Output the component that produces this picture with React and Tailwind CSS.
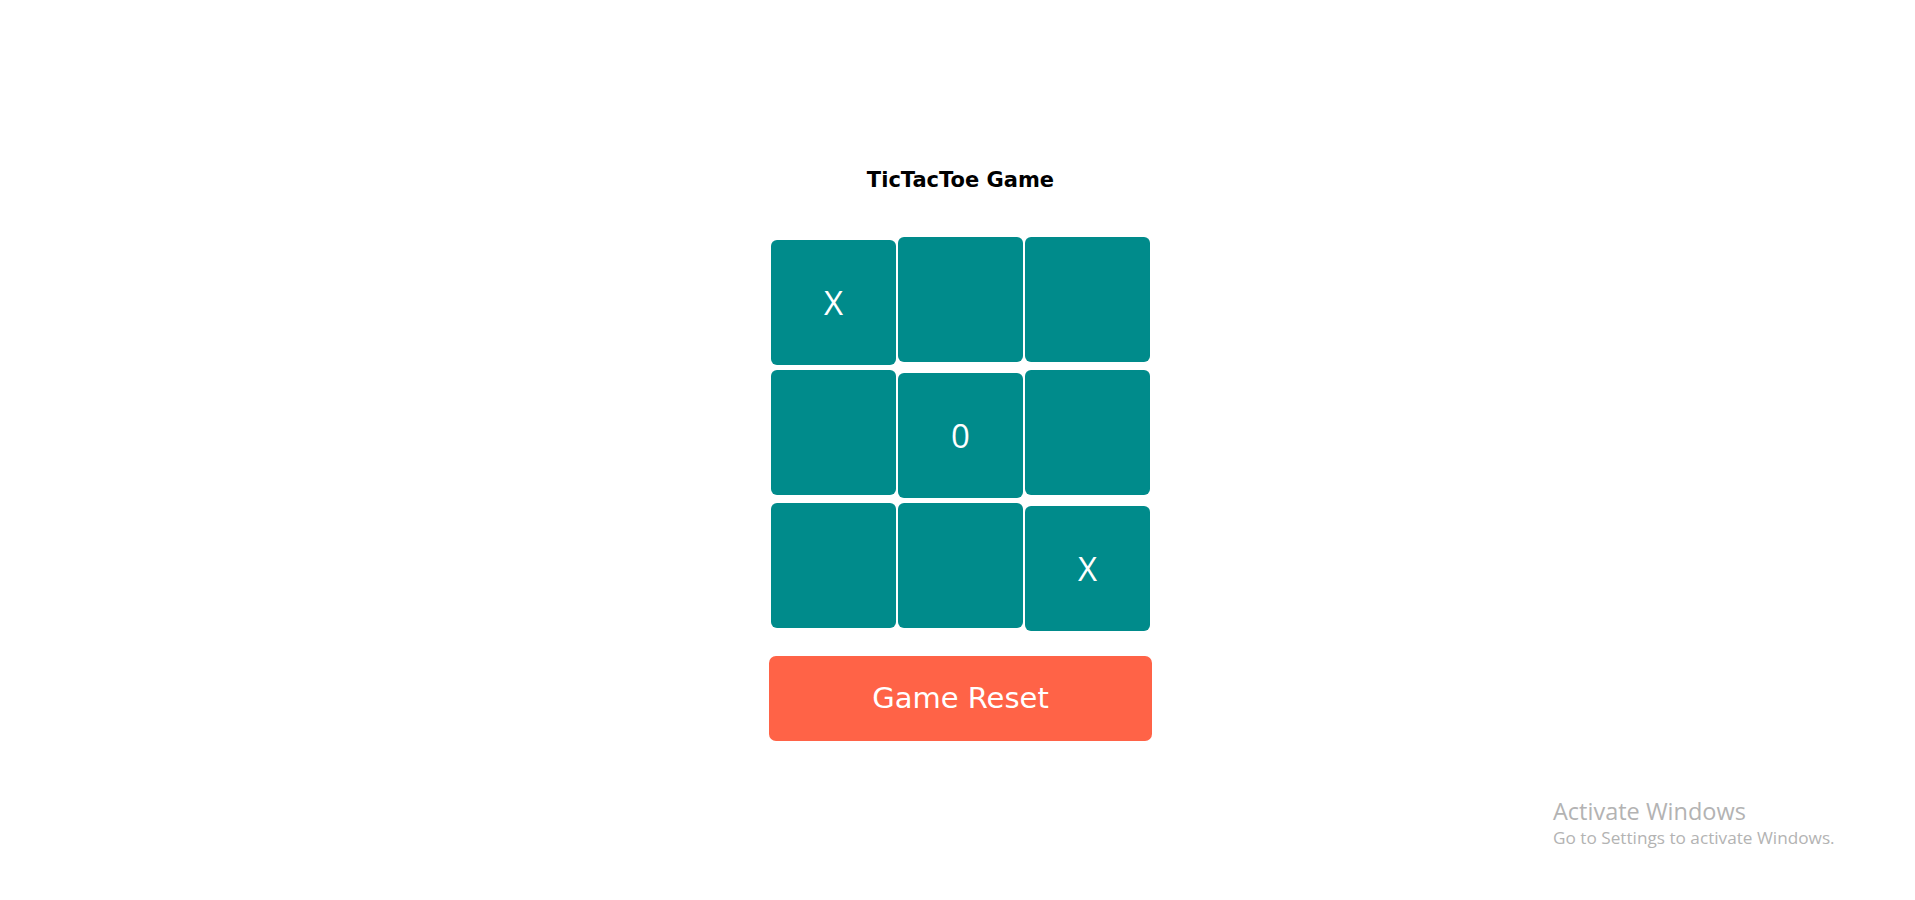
import React, { useState } from "react";

export default function App() {
  const [board] = useState(["X", "", "", "", "0", "", "", "", "X"]);
  const rows = [0, 1, 2];
  return (
    <div className="relative w-full h-[900px] bg-white overflow-hidden">
      <div className="flex flex-col items-center pt-[164px] pl-[6px]">
        <div
          className="text-[21px] leading-[32px] font-bold text-black"
          style={{ fontFamily: '"Comic Sans MS", "DejaVu Sans", cursive' }}
        >
          TicTacToe Game
        </div>
        <div className="flex flex-col gap-[5px] mt-[41px]">
          {rows.map((r) => (
            <div key={r} className="flex items-start gap-[2px]">
              {[0, 1, 2].map((c) => {
                const v = board[r * 3 + c];
                return (
                  <button
                    key={c}
                    className={
                      "w-[125px] h-[125px] rounded-[6px] bg-[#008B8B] text-white text-[33px] flex items-center justify-center " +
                      (v ? "mt-[3px]" : "")
                    }
                    style={{ fontFamily: '"Open Sans", "Noto Sans", sans-serif' }}
                  >
                    {v}
                  </button>
                );
              })}
            </div>
          ))}
        </div>
        <button
          className="mt-[25px] w-[383px] h-[85px] rounded-[7px] bg-[#FF6347] text-white text-[29px] flex items-center justify-center"
          style={{ fontFamily: '"Comic Sans MS", "DejaVu Sans", cursive' }}
        >
          Game Reset
        </button>
      </div>
      <div
        className="absolute left-[1553px] top-[797px] text-[#b3b3b3]"
        style={{ fontFamily: '"Open Sans", "Noto Sans", sans-serif' }}
      >
        <div className="text-[23.5px] leading-[28px]">Activate Windows</div>
        <div className="text-[17.2px] leading-[22px] mt-[2px]">Go to Settings to activate Windows.</div>
      </div>
    </div>
  );
}
